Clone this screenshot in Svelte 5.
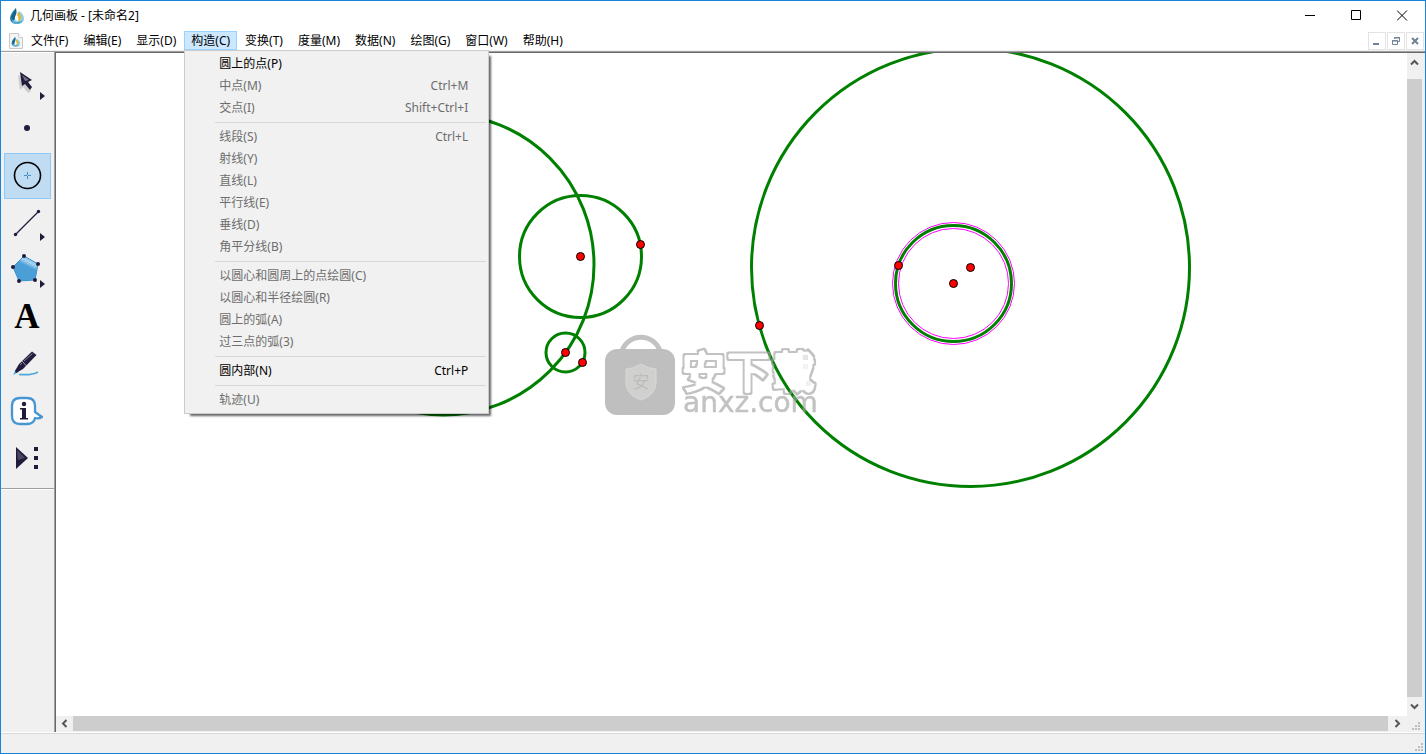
<script lang="ts">
	interface MenuItem {
		text: string;
		kbd?: string;
		enabled?: boolean;
	}

	const menus = [
		'文件(F)',
		'编辑(E)',
		'显示(D)',
		'构造(C)',
		'变换(T)',
		'度量(M)',
		'数据(N)',
		'绘图(G)',
		'窗口(W)',
		'帮助(H)',
	];

	/** Groups are divided by a separator */
	const constructMenu: MenuItem[][] = [
		[
			{ text: '圆上的点(P)', enabled: true },
			{ text: '中点(M)', kbd: 'Ctrl+M' },
			{ text: '交点(I)', kbd: 'Shift+Ctrl+I' },
		],
		[
			{ text: '线段(S)', kbd: 'Ctrl+L' },
			{ text: '射线(Y)' },
			{ text: '直线(L)' },
			{ text: '平行线(E)' },
			{ text: '垂线(D)' },
			{ text: '角平分线(B)' },
		],
		[
			{ text: '以圆心和圆周上的点绘圆(C)' },
			{ text: '以圆心和半径绘圆(R)' },
			{ text: '圆上的弧(A)' },
			{ text: '过三点的弧(3)' },
		],
		[{ text: '圆内部(N)', kbd: 'Ctrl+P', enabled: true }],
		[{ text: '轨迹(U)' }],
	];

	const tools = ['arrow', 'point', 'circle', 'line', 'polygon', 'text', 'marker', 'info', 'custom'];
	const withFlyout = ['arrow', 'line', 'polygon'];

	const circles = [
		{ x: 388, y: 212, r: 150.5 },
		{ x: 525, y: 204, r: 61 },
		{ x: 510, y: 300, r: 19.5 },
		{ x: 915, y: 215, r: 219 },
		{ x: 898, y: 231, r: 58, selected: true },
	];

	const points = [
		{ x: 525, y: 204 },
		{ x: 585, y: 192 },
		{ x: 510, y: 300 },
		{ x: 527, y: 310 },
		{ x: 704, y: 273 },
		{ x: 843, y: 213 },
		{ x: 915, y: 215 },
		{ x: 898, y: 231 },
	];

	let openMenu = $state('构造(C)');
	let activeTool = $state('circle');
</script>

{#snippet logo()}
	<path d="M7 0C3 4 1 7 1 10.500C1 14 4 16 8 16Z" fill="#2b86b5" />
	<path d="M10 3C13 5 15 7 15 10.500C15 14 12 16 8 16C5 16 3 14 3 12Z" fill="#8fd0e8" />
	<path d="M7 0L8 9L4 13L2 9Z" fill="#176489" />
	<path d="M8 4C10 7 12 9 10 12C8 14 5 12 6 9Z" fill="#fff" />
	<path d="M9 4C14 8 12 12 9 14C10 10 9 8 8 7Z" fill="#e9b52d" />
	<path d="M3 12C6 15 10 15 14 12C12 17 5 17 3 12Z" fill="#3e9ecb" />
{/snippet}

{#snippet grip()}
	<svg class="grip" width="8" height="8" aria-hidden="true">
		<path d="M6 0h2v2h-2zM3 3h2v2h-2zM6 3h2v2h-2zM0 6h2v2h-2zM3 6h2v2h-2zM6 6h2v2h-2z" fill="#bfbfbf" />
	</svg>
{/snippet}

<div class="window">
	<header class="titlebar">
		<svg class="titlebar__icon" width="16" height="16" aria-hidden="true">{@render logo()}</svg>
		<h1>几何画板 - [未命名2]</h1>
		<div class="titlebar__buttons">
			<button aria-label="最小化">
				<svg width="11" height="11"><path d="M0 5.500h10" stroke="#000" /></svg>
			</button>
			<button aria-label="最大化">
				<svg width="11" height="11"><path d="M.5 .5h9v9h-9z" fill="none" stroke="#000" /></svg>
			</button>
			<button aria-label="关闭">
				<svg width="11" height="11"><path d="M0 .5l10 10M10 .5l-10 10" stroke="#000" /></svg>
			</button>
		</div>
	</header>

	<nav class="menubar">
		<svg class="menubar__icon" width="14" height="16" viewBox="0 0 14 16" aria-hidden="true">
			<path d="M.5 .5h9l4 4v11h-13z" fill="#f4f4f4" stroke="#c9c9c9" />
			<path d="M9.500 .5v4h4" fill="#fff" stroke="#d0d0d0" />
			<g transform="translate(2 4) scale(.6)">{@render logo()}</g>
		</svg>
		<ul>
			{#each menus as menu}
				<li>
					<button class:open={openMenu === menu} onclick={() => (openMenu = menu)}>{menu}</button>
					{#if menu === '构造(C)' && openMenu === menu}
						<div class="menu">
							{#each constructMenu as group, i}
								{#if i > 0}
									<hr />
								{/if}
								{#each group as item}
									<button class="menu__item" disabled={!item.enabled}>
										<span>{item.text}</span>
										{#if item.kbd}
											<span>{item.kbd}</span>
										{/if}
									</button>
								{/each}
							{/each}
						</div>
					{/if}
				</li>
			{/each}
		</ul>
		<div class="menubar__buttons">
			<button aria-label="最小化文档">
				<svg width="10" height="10"><path d="M1 8h6" stroke="#718296" stroke-width="2" /></svg>
			</button>
			<button aria-label="还原文档">
				<svg width="10" height="10">
					<path d="M3.500 3V1.500h5v4H7M3 2h6M1.500 4.500h5v4h-5zM1 5h6" fill="none" stroke="#718296" />
				</svg>
			</button>
			<button aria-label="关闭文档">
				<svg width="10" height="10"><path d="M2 2l6 6M8 2l-6 6" stroke="#718296" stroke-width="2" /></svg>
			</button>
		</div>
	</nav>

	<main>
		<aside>
			<div class="tools">
				{#each tools as tool}
					<button class:active={activeTool === tool} aria-label={tool} onclick={() => (activeTool = tool)}>
						<svg width="47" height="46">
							{#if tool === 'arrow'}
								<path class="shade" d="M14 16L26 24L22 26L27 32L24 34L19 28L16 31Z" />
								<path d="M16 13L28 21L24 23L28 28L26 31L21 25L18 27Z" fill="#211b3c" />
								<path d="M18 16L25 21L21 22Z" fill="#77738b" />
							{:else if tool === 'point'}
								<circle cx="23" cy="22" r="3" fill="#211b3c" />
							{:else if tool === 'circle'}
								<circle cx="23.500" cy="22.500" r="13" fill="none" stroke="#000" stroke-width="1.600" />
								<path d="M20 22.500h3M24 22.500h3M23.500 19v3M23.500 23v3" stroke="#3f8fc4" />
							{:else if tool === 'line'}
								<path d="M11.500 34.500L34.500 11.500" stroke="#211b3c" stroke-width="1.300" />
								<circle cx="11.500" cy="34.500" r="1.700" fill="#211b3c" />
								<circle cx="34.500" cy="11.500" r="1.700" fill="#211b3c" />
							{:else if tool === 'polygon'}
								<defs>
									<linearGradient id="gloss" x1=".8" y1="0" x2=".5" y2=".6">
										<stop offset="0" stop-color="#6fb4e2" />
										<stop offset=".45" stop-color="#a6d2f0" />
										<stop offset=".7" stop-color="#4c9fd6" />
									</linearGradient>
								</defs>
								<path d="M20 9L34 17L31 33L15 34L9 20Z" fill="url(#gloss)" stroke="#3991cc" />
								{#each [[20, 9], [34, 17], [31, 33], [15, 34], [9, 20]] as [x, y]}
									<circle cx={x} cy={y} r="2" fill="#211b3c" />
								{/each}
							{:else if tool === 'text'}
								<text class="letter" x="23" y="34" text-anchor="middle">A</text>
							{:else if tool === 'marker'}
								<path d="M15 33.500C22 34 29 34 34 31" fill="none" stroke="#4fa8dc" stroke-width="1.700" />
								<path d="M9 34L12 28L15 31Z" fill="#4fa8dc" />
								<path d="M11 30L15 23L28 10.500L32.500 14L19 28L12 32Z" fill="#211b3c" />
								<path d="M20 20L28.500 12.500M16 24L18 22" stroke="#8582a0" />
								<path d="M18 20L22.500 25" stroke="#dcdce4" stroke-width=".7" />
							{:else if tool === 'info'}
								<path
									d="M16 10H23Q31 10 31 18V24L38 29Q35 31 31 30Q30 36 23 36H16Q8 36 8 28V18Q8 10 16 10Z"
									fill="#fff"
									stroke="#4796d2"
									stroke-width="2.300"
									stroke-linejoin="round"
								/>
								<circle cx="20" cy="16" r="2.200" fill="#211b3c" />
								<path d="M16 20H22V30H24V31.500H16V30H18V21.500H16Z" fill="#211b3c" />
							{:else}
								<path d="M12 12L24 23L12 34Z" fill="#211b3c" />
								<path d="M13 15L21 23L14 25Z" fill="#4b4763" />
								<path d="M30 12h4v4h-4zM30 21h4v4h-4zM30 30h4v4h-4z" fill="#211b3c" />
							{/if}
							{#if withFlyout.includes(tool)}
								<path d="M36 33L41 37L36 41Z" fill="#211b3c" />
							{/if}
						</svg>
					</button>
				{/each}
			</div>
		</aside>

		<section class="document">
			<svg class="sketch" role="img" aria-label="画板">
				<!-- geometry sits on pixel centres -->
				<g transform="translate(-.5 -.5)">
					{#each circles as c}
						<circle class="outline" cx={c.x} cy={c.y} r={c.r} />
						{#if c.selected}
							<circle class="halo" cx={c.x} cy={c.y} r={c.r + 3} />
							<circle class="halo" cx={c.x} cy={c.y} r={c.r - 3} />
						{/if}
					{/each}
					{#each points as p}
						<circle class="dot" cx={p.x} cy={p.y} r="4" />
					{/each}
				</g>
				<filter id="hollow" x="-5%" y="-5%" width="110%" height="110%">
					<feMorphology in="SourceGraphic" operator="erode" radius="2" result="inner" />
					<feComposite in="SourceGraphic" in2="inner" operator="out" />
				</filter>
				<g class="watermark">
					<path d="M566 298A20 20 0 0 1 604 298" fill="none" stroke="#a3a3a3" stroke-width="5" />
					<rect x="549" y="296" width="70" height="66" rx="12" fill="#9e9e9e" />
					<path d="M585 311Q593 316 600 316V331Q599 342 585 347Q571 342 570 331V316Q577 316 585 311Z" fill="#b7b7b4" stroke="#c6c6c6" />
					<text class="seal" x="585" y="335" text-anchor="middle">安</text>
					<text class="brand" x="625" y="336" filter="url(#hollow)">安下载</text>
					<text class="domain" x="627" y="359">anxz.com</text>
				</g>
			</svg>

			<div class="scroll scroll--v">
				<button aria-label="向上"><svg width="9" height="7"><path d="M1 5.500L4.500 2L8 5.500" /></svg></button>
				<div class="scroll__thumb"></div>
				<button aria-label="向下"><svg width="9" height="7"><path d="M1 1.500L4.500 5L8 1.500" /></svg></button>
			</div>
			<div class="scroll scroll--h">
				<button aria-label="向左"><svg width="7" height="9"><path d="M5.500 1L2 4.500L5.500 8" /></svg></button>
				<div class="scroll__thumb"></div>
				<button aria-label="向右"><svg width="7" height="9"><path d="M1.500 1L5 4.500L1.500 8" /></svg></button>
			</div>
			<div class="corner">{@render grip()}</div>
		</section>
	</main>

	<footer>{@render grip()}</footer>
</div>

<style>
	.window {
		display: flex;
		flex-direction: column;
		box-sizing: border-box;
		height: 100vh;
		border: 1px solid #1883d7;
		background: #fff;
		color: #000;
		font-family: "Noto Sans", "Noto Sans CJK SC", sans-serif;
		font-size: 12px;
		line-height: 18px;
	}

	svg {
		display: block;
	}

	button {
		padding: 0;
		border: 0;
		background: none;
		color: inherit;
		font: inherit;
	}

	.titlebar {
		display: flex;
		align-items: center;
		height: 29px;
		padding-left: 8px;

		h1 {
			flex: 1;
			margin: 0 0 0 5px;
			font-size: 12px;
			font-weight: normal;
		}
	}

	.titlebar__buttons {
		display: flex;
		align-self: stretch;

		button {
			display: grid;
			place-items: center;
			width: 46px;
		}
	}

	.menubar {
		display: flex;
		align-items: center;
		height: 19px;
		padding-top: 1px;

		ul {
			display: flex;
			flex: 1;
			gap: 1px;
			margin: 0;
			padding: 0;
			list-style: none;
		}

		li {
			position: relative;
		}

		li > button {
			display: block;
			box-sizing: border-box;
			height: 19px;
			padding: 0 6px;
			border: 1px solid transparent;
			line-height: 17px;
			white-space: nowrap;
		}

		li > button.open {
			border-color: #99d1ff;
			background: #cce8ff;
		}
	}

	.menubar__icon {
		margin: 0 1px 0 8px;
	}

	.menubar__buttons {
		display: flex;
		gap: 1px;
		padding-right: 1px;

		button {
			display: grid;
			place-items: center;
			box-sizing: border-box;
			width: 18px;
			height: 18px;
			border: 1px solid #e3e3e3;
		}
	}

	.menu {
		position: absolute;
		z-index: 1;
		top: 100%;
		left: 0;
		box-sizing: border-box;
		width: 305px;
		padding: 2px;
		border: 1px solid #ccc;
		background: #f1f1f1;
		box-shadow: 4px 4px 2px -2px rgb(0 0 0 / 60%);

		hr {
			height: 1px;
			margin: 3px 0 3px 28px;
			border: 0;
			background: #d7d7d7;
		}
	}

	.menu__item {
		display: flex;
		justify-content: space-between;
		align-items: center;
		width: 100%;
		height: 22px;
		padding: 0 18px 0 32px;

		&:disabled {
			color: #6d6d6d;
		}
	}

	main {
		display: flex;
		flex: 1;
		min-height: 0;
		border-top: 1px solid #f0f0f0;
	}

	aside {
		width: 53px;
		box-sizing: border-box;
		border-top: 1px solid #a0a0a0;
		border-bottom: 1px solid #a0a0a0;
		background: #f0f0f0;
	}

	.tools {
		display: flex;
		flex-direction: column;
		gap: 1px;
		padding: 6px 3px 7px;
		border-top: 1px solid #fff;
		border-bottom: 1px solid #a0a0a0;
		box-shadow: 0 1px #fff;

		button {
			width: 47px;
			height: 46px;
		}

		button.active {
			background: #c0dcf3;
			box-shadow: inset 0 0 0 1px #90c8f6;
		}
	}

	.shade {
		fill: #000;
		opacity: 0.15;
	}

	.letter {
		font: bold 35px "Liberation Serif", serif;
	}

	.document {
		display: grid;
		flex: 1;
		grid-template-rows: 1fr 17px;
		grid-template-columns: 1fr 18px;
		min-width: 0;
		border-top: 1px solid #a0a0a0;
		border-left: 1px solid #a0a0a0;
		background: #f0f0f0;
		box-shadow: inset 1px 1px #696969;
		padding: 1px 0 0 1px;
	}

	.sketch {
		width: 100%;
		height: 100%;
		background: #fff;
	}

	.outline {
		fill: none;
		stroke: #008000;
		stroke-width: 3;
	}

	.halo {
		fill: none;
		stroke: #f0f;
		stroke-width: 1;
	}

	.dot {
		fill: #f00;
		stroke: #000;
		stroke-width: 1;
	}

	.watermark {
		opacity: 0.65;
	}

	.seal {
		fill: #9a9a9a;
		font: 17px "Noto Sans CJK SC", sans-serif;
	}

	.brand {
		fill: #a3a3a3;
		stroke: #a3a3a3;
		stroke-width: 4;
		stroke-linejoin: round;
		font: bold 45px "Noto Sans CJK SC", sans-serif;
	}

	.domain {
		fill: #a3a3a3;
		stroke: #a3a3a3;
		stroke-width: 0.5;
		font: 28px "DejaVu Sans", sans-serif;
	}

	.scroll {
		display: flex;

		button {
			display: grid;
			place-items: center;
		}

		path {
			fill: none;
			stroke: #555;
			stroke-width: 2;
		}
	}

	.scroll__thumb {
		flex: 1;
		background: #cdcdcd;
	}

	.scroll--v {
		flex-direction: column;
		width: 15px;

		button {
			height: 19px;
		}

		.scroll__thumb {
			margin-top: 7px;
		}
	}

	.scroll--h {
		height: 15px;

		button:first-child {
			width: 17px;
		}

		button:last-child {
			width: 19px;
		}
	}

	.corner {
		padding: 6px 5px;
	}

	footer {
		display: flex;
		justify-content: flex-end;
		align-items: flex-end;
		box-sizing: border-box;
		height: 20px;
		padding: 2px;
		border-top: 1px solid #d7d7d7;
		background: #f0f0f0;
		box-shadow: 0 -1px #fff;
	}
</style>
